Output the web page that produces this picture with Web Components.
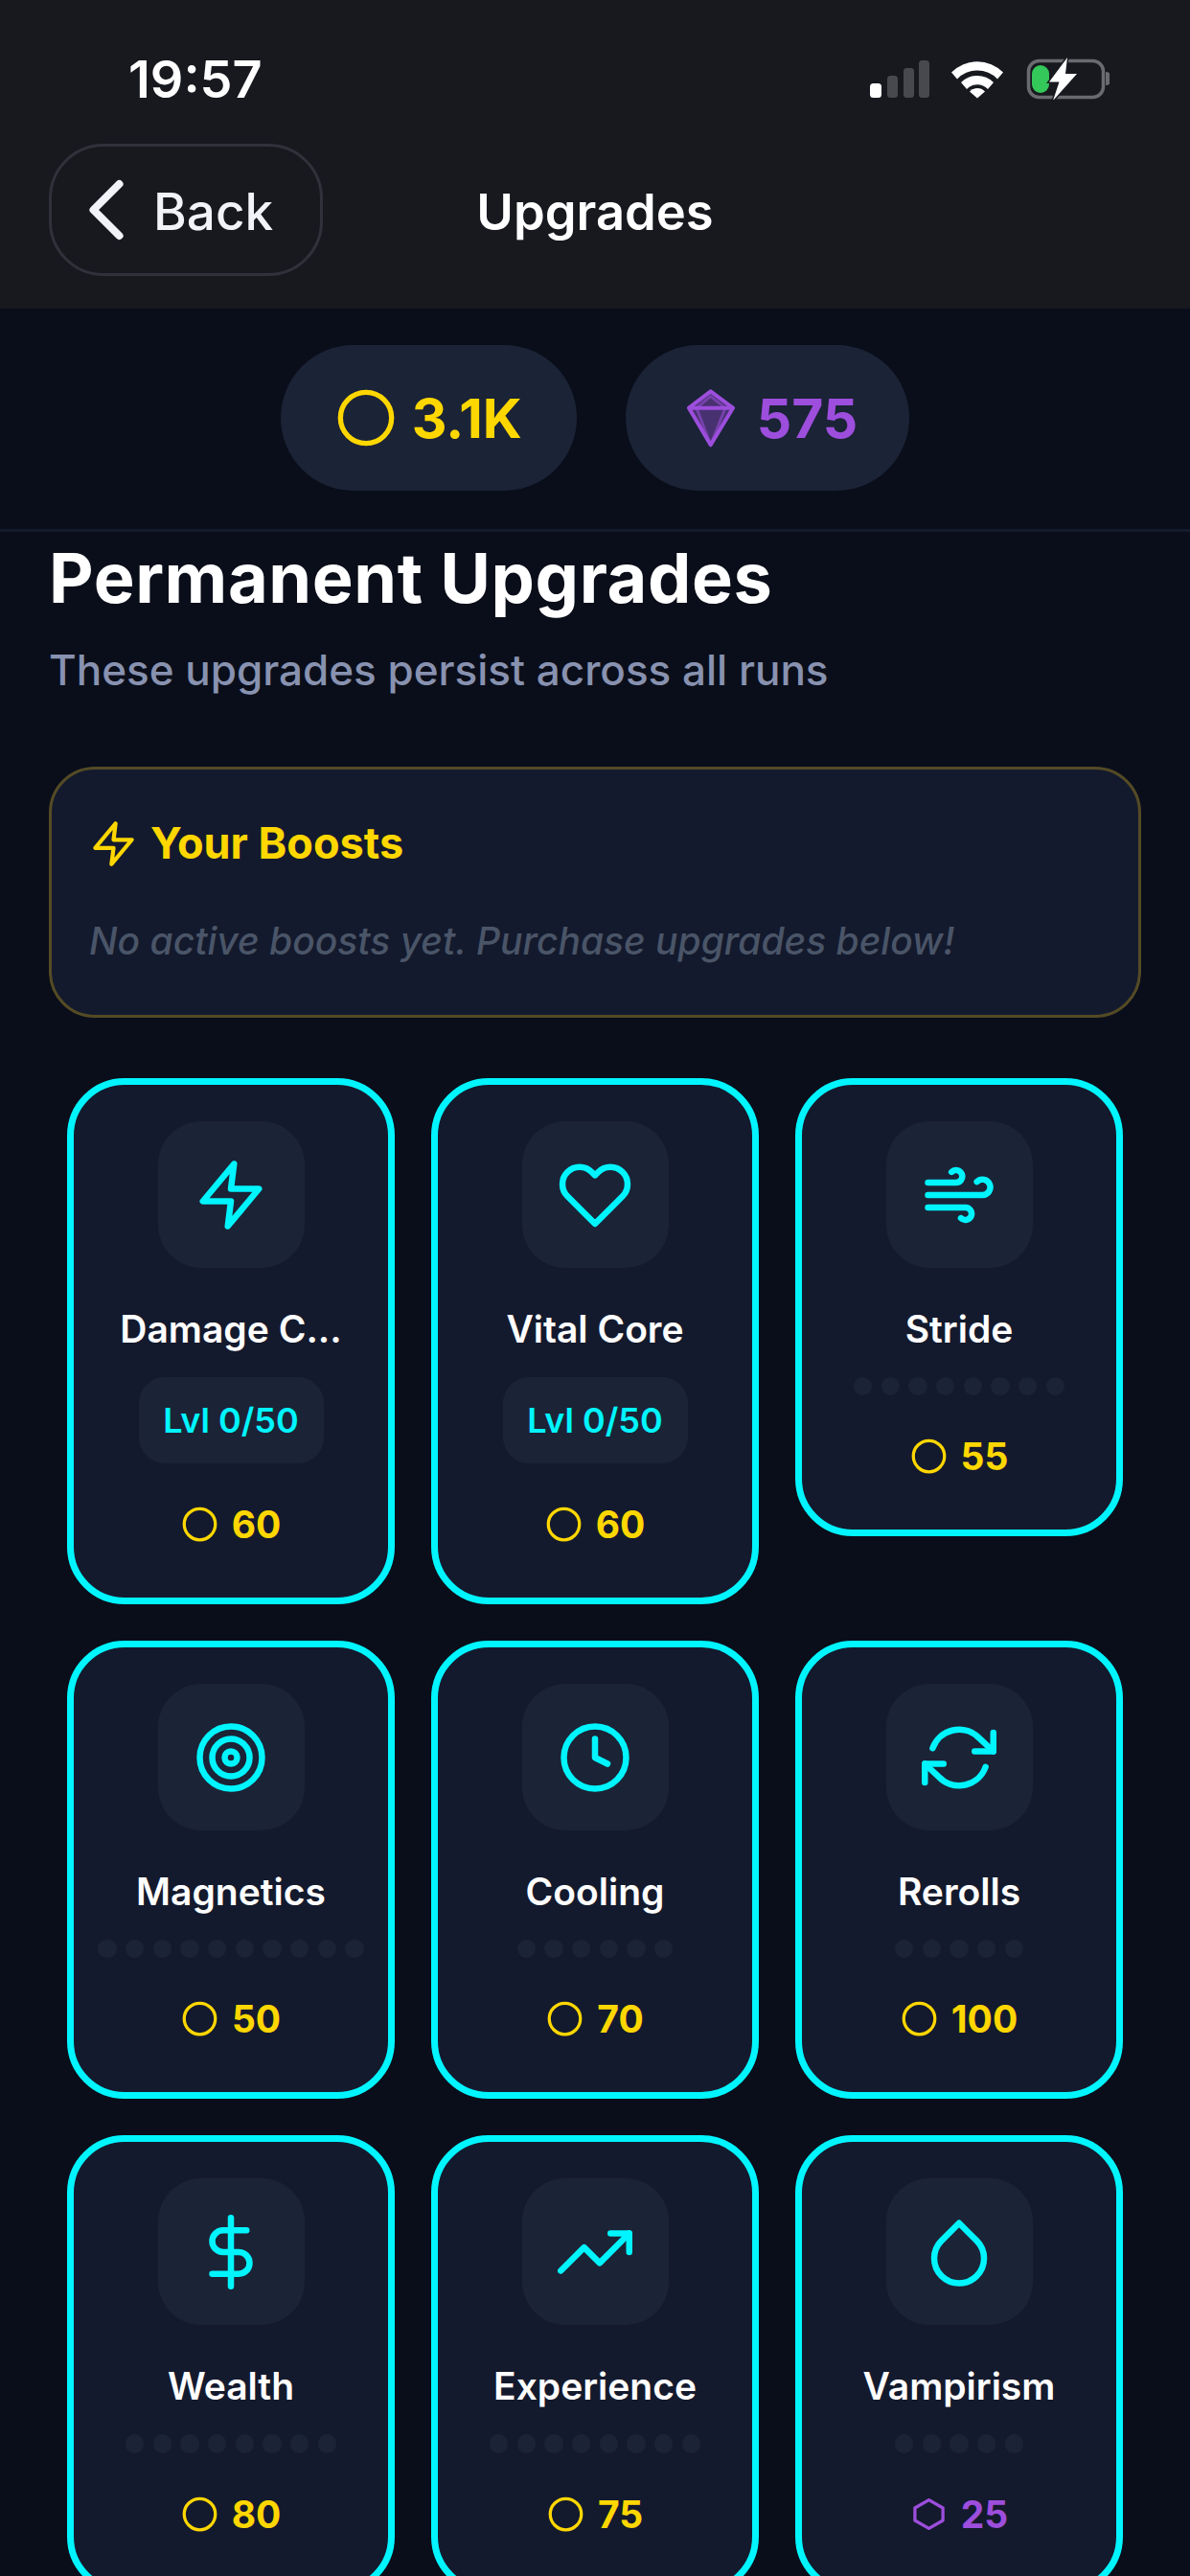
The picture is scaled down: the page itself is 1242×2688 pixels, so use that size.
<!DOCTYPE html>
<html lang="en">
<head>
<meta charset="utf-8">
<title>Upgrades</title>
<style>
  html, body { margin: 0; padding: 0; width: 1242px; height: 2688px; overflow: hidden; background: #0a0e1a; }
  body { font-family: Inter, "Noto Sans", sans-serif; color: #fff; }
</style>
</head>
<body>
  <upgrades-header title-text="Upgrades"></upgrades-header>
  <currency-bar coins="3.1K" gems="575"></currency-bar>
  <upgrades-page>
    <boosts-panel></boosts-panel>
    <upgrade-card name="Damage C..." icon="zap" level="Lvl 0/50" cost="60"></upgrade-card>
    <upgrade-card name="Vital Core" icon="heart" level="Lvl 0/50" cost="60"></upgrade-card>
    <upgrade-card name="Stride" icon="wind" dots="8" cost="55"></upgrade-card>
    <upgrade-card name="Magnetics" icon="target" dots="10" cost="50"></upgrade-card>
    <upgrade-card name="Cooling" icon="clock" dots="6" cost="70"></upgrade-card>
    <upgrade-card name="Rerolls" icon="refresh" dots="5" cost="100"></upgrade-card>
    <upgrade-card name="Wealth" icon="dollar" dots="8" cost="80"></upgrade-card>
    <upgrade-card name="Experience" icon="trending" dots="8" cost="75"></upgrade-card>
    <upgrade-card name="Vampirism" icon="droplet" dots="5" cost="25" currency="gem"></upgrade-card>
  </upgrades-page>

<script>
(() => {
  // feather style glyphs, all on a 24 box
  const ICONS = {
    zap: '<polygon points="13 2 3 14 12 14 11 22 21 10 12 10 13 2"/>',
    heart: '<path d="M20.84 4.61a5.5 5.5 0 0 0-7.78 0L12 5.67l-1.06-1.06a5.5 5.5 0 0 0-7.78 7.78l1.06 1.06L12 21.23l7.78-7.78 1.06-1.06a5.5 5.5 0 0 0 0-7.78z"/>',
    wind: '<path d="M9.59 4.59A2 2 0 1 1 11 8H2m10.59 11.41A2 2 0 1 0 14 16H2m15.73-8.27A2.5 2.5 0 1 1 19.5 12H2"/>',
    target: '<circle cx="12" cy="12" r="10"/><circle cx="12" cy="12" r="6"/><circle cx="12" cy="12" r="2"/>',
    clock: '<circle cx="12" cy="12" r="10"/><polyline points="12 6 12 12 16 14"/>',
    refresh: '<polyline points="23 4 23 10 17 10"/><polyline points="1 20 1 14 7 14"/><path d="M3.51 9a9 9 0 0 1 14.85-3.36L23 10M1 14l4.64 4.36A9 9 0 0 0 20.49 15"/>',
    dollar: '<line x1="12" y1="1" x2="12" y2="23"/><path d="M17 5H9.5a3.5 3.5 0 0 0 0 7h5a3.5 3.5 0 0 1 0 7H6"/>',
    trending: '<polyline points="23 6 13.5 15.5 8.5 10.5 1 18"/><polyline points="17 6 23 6 23 12"/>',
    droplet: '<path d="M12 2.69l5.66 5.66a8 8 0 1 1-11.31 0z"/>',
    coin: '<circle cx="12" cy="12" r="10"/>',
    hexagon: '<path d="M21 16V8L12 2.8 3 8v8l9 5.2z"/>',
    back: '<polyline points="15 18 9 12 15 6"/>'
  };

  const glyph = (name, size, color, stroke = 2) => `<svg width="${size}" height="${size}" viewBox="0 0 24 24" fill="none" stroke="${color}" stroke-width="${stroke}" stroke-linecap="round" stroke-linejoin="round" style="display:block;flex:none">${ICONS[name]}</svg>`;

  class UpgradesHeader extends HTMLElement {
    constructor() {
      super();
      this.attachShadow({mode: 'open'});
      const title = this.getAttribute('title-text') || '';
      this.shadowRoot.innerHTML = `
        <style>
          :host { display: block; height: 322px; background: #17191f; box-sizing: border-box; }
          .status { height: 150px; box-sizing: border-box; padding: 57px 84px 0 134px; display: flex; justify-content: space-between; align-items: flex-start; }
          .time { font-size: 54px; font-weight: 600; line-height: 52px; color: #fff; }
          .status svg { display: block; margin-top: 3px; }
          nav { display: grid; grid-template-columns: 1fr auto 1fr; align-items: center; padding: 0 51px; }
          .back { justify-self: start; width: 286px; height: 138px; box-sizing: border-box; border: 3px solid #30313a; border-radius: 57px; display: flex; align-items: center; padding-left: 3px; font-size: 53px; font-weight: 500; color: #f2f3f8; }
          .back span { margin: 3px 0 0 -5px; }
          h1 { margin: 3px 0 0; font-size: 52.5px; font-weight: 600; line-height: 62px; color: #fff; }
        </style>
        <div class="status">
          <span class="time">19:57</span>
          <svg width="250" height="44" viewBox="908 60 250 44" aria-hidden="true">
            <rect x="908" y="87" width="12" height="15" rx="3.5" fill="#fff"/>
            <rect x="926" y="79" width="11" height="23" rx="3.5" fill="#48494e"/>
            <rect x="943" y="71" width="11" height="31" rx="3.5" fill="#48494e"/>
            <rect x="959" y="63" width="11" height="39" rx="3.5" fill="#48494e"/>
            <path d="M993 75.5a38 38 0 0 1 54 0l-6 7a29 29 0 0 0-42 0z" fill="#fff"/>
            <path d="M1003 86a24 24 0 0 1 34 0l-6 7a15 15 0 0 0-22 0z" fill="#fff"/>
            <path d="M1012 95.5a11 11 0 0 1 16 0l-8 7z" fill="#fff"/>
            <rect x="1073.5" y="63.5" width="78" height="38" rx="11" fill="none" stroke="#6a6b70" stroke-width="3.5"/>
            <path d="M1154 75a6 6 0 0 1 0 14z" fill="#6a6b70"/>
            <rect x="1077" y="68" width="18" height="29" rx="9" fill="#34c759"/>
            <path d="M1114 60l-19 25.5h10.5L1099 105l25-28h-12z" fill="#fff" stroke="#17191f" stroke-width="3" paint-order="stroke"/>
          </svg>
        </div>
        <nav>
          <div class="back">${glyph('back', 108, '#f2f3f8', 1.8)}<span>Back</span></div>
          <h1>${title}</h1>
          <span></span>
        </nav>`;
    }
  }

  class CurrencyBar extends HTMLElement {
    constructor() {
      super();
      this.attachShadow({mode: 'open'});
      this.shadowRoot.innerHTML = `
        <style>
          :host { display: flex; justify-content: center; gap: 51px; padding: 38px 0 40px; border-bottom: 3px solid #141b2d; }
          .pill { height: 152px; padding: 0 57px; box-sizing: border-box; border-radius: 76px; background: #1b2336; display: flex; align-items: center; gap: 16px; font-size: 57px; font-weight: 700; }
          .coins { color: #ffd700; }
          .gems { color: #9d4edd; padding-right: 54px; }
        </style>
        <div class="pill coins">${glyph('coin', 64, '#ffd700')}<span>${this.getAttribute('coins')}</span></div>
        <div class="pill gems">
          <svg width="64" height="64" viewBox="0 0 64 64" fill="none" stroke="#9d4edd" stroke-linejoin="round" style="display:block;flex:none">
            <path d="M31.7 4.3 9 21.7 31.7 60.3 55 21.7z" fill="#9d4edd" fill-opacity=".35" stroke="none"/>
            <path d="M17 21.7 31.7 9.5 47 21.7M17 21.7 31.7 60.3 47 21.7" stroke-width="3" stroke-opacity=".55"/>
            <path d="M31.7 4.3 9 21.7 31.7 60.3 55 21.7zM9 21.7H55" stroke-width="4"/>
          </svg>
          <span>${this.getAttribute('gems')}</span>
        </div>`;
    }
  }

  class UpgradesPage extends HTMLElement {
    constructor() {
      super();
      this.attachShadow({mode: 'open'});
      this.shadowRoot.innerHTML = `
        <style>
          :host { display: block; padding: 5px 51px 0; }
          h2 { margin: 0; font-size: 72px; font-weight: 700; line-height: 86px; letter-spacing: .6px; color: #fff; }
          p { margin: 27px 0 75px; font-size: 44px; font-weight: 500; line-height: 52px; color: #8892b0; }
          .grid { display: grid; grid-template-columns: repeat(3, 342px); gap: 38px; align-items: start; padding: 0 19px; margin-top: 63px; }
        </style>
        <h2>Permanent Upgrades</h2>
        <p>These upgrades persist across all runs</p>
        <slot name="boosts"></slot>
        <div class="grid"><slot></slot></div>`;
    }
    connectedCallback() {
      const boosts = this.querySelector('boosts-panel');
      if (boosts) boosts.slot = 'boosts';
    }
  }

  class BoostsPanel extends HTMLElement {
    constructor() {
      super();
      this.attachShadow({mode: 'open'});
      this.shadowRoot.innerHTML = `
        <style>
          :host { display: block; box-sizing: border-box; height: 262px; padding: 51px 39px 0; border: 3px solid #544b25; border-radius: 48px; background: #141a2d; }
          .head { display: flex; align-items: center; gap: 13px; font-size: 45px; font-weight: 700; line-height: 52px; color: #ffd700; }
          .note { margin-top: 52px; font-size: 39px; font-style: italic; font-weight: 500; line-height: 48px; color: #4a5568; }
        </style>
        <div class="head">${glyph('zap', 51, '#ffd700')}<span>Your Boosts</span></div>
        <div class="note">No active boosts yet. Purchase upgrades below!</div>`;
    }
  }

  class UpgradeCard extends HTMLElement {
    constructor() {
      super();
      this.attachShadow({mode: 'open'});
      const gem = this.getAttribute('currency') === 'gem';
      const tone = gem ? '#9d4edd' : '#ffd700';
      const level = this.getAttribute('level');
      const dots = Number(this.getAttribute('dots') || 0);
      const progress = level
        ? `<div class="level">${level}</div>`
        : `<div class="dots">${'<i></i>'.repeat(dots)}</div>`;
      this.shadowRoot.innerHTML = `
        <style>
          :host { display: flex; flex-direction: column; align-items: center; box-sizing: border-box; padding: 38px 0 57px; border: 7px solid #00f5ff; border-radius: 60px; background: #141a2d; }
          .icon { width: 153px; height: 153px; border-radius: 45px; background: #1b2336; display: flex; align-items: center; justify-content: center; }
          .name { margin-top: 40px; font-size: 39px; font-weight: 600; line-height: 48px; color: #fff; white-space: nowrap; }
          .level { margin-top: 26px; width: 193px; height: 90px; border-radius: 27px; background: #1b2336; display: flex; align-items: center; justify-content: center; font-size: 36px; font-weight: 600; color: #00f5ff; }
          .dots { margin-top: 26px; display: flex; gap: 9.33px; }
          .dots i { display: block; width: 19.33px; height: 19.33px; border-radius: 50%; background: #1b2336; }
          .cost { margin-top: 44px; display: flex; align-items: center; gap: 14px; font-size: 39px; font-weight: 700; line-height: 39px; color: ${tone}; }
        </style>
        <div class="icon">${glyph(this.getAttribute('icon'), 78, '#00f5ff')}</div>
        <div class="name">${this.getAttribute('name')}</div>
        ${progress}
        <div class="cost">${glyph(gem ? 'hexagon' : 'coin', 39, tone)}<span>${this.getAttribute('cost')}</span></div>`;
    }
  }

  customElements.define('upgrades-header', UpgradesHeader);
  customElements.define('currency-bar', CurrencyBar);
  customElements.define('upgrades-page', UpgradesPage);
  customElements.define('boosts-panel', BoostsPanel);
  customElements.define('upgrade-card', UpgradeCard);
})();
</script>
</body>
</html>
